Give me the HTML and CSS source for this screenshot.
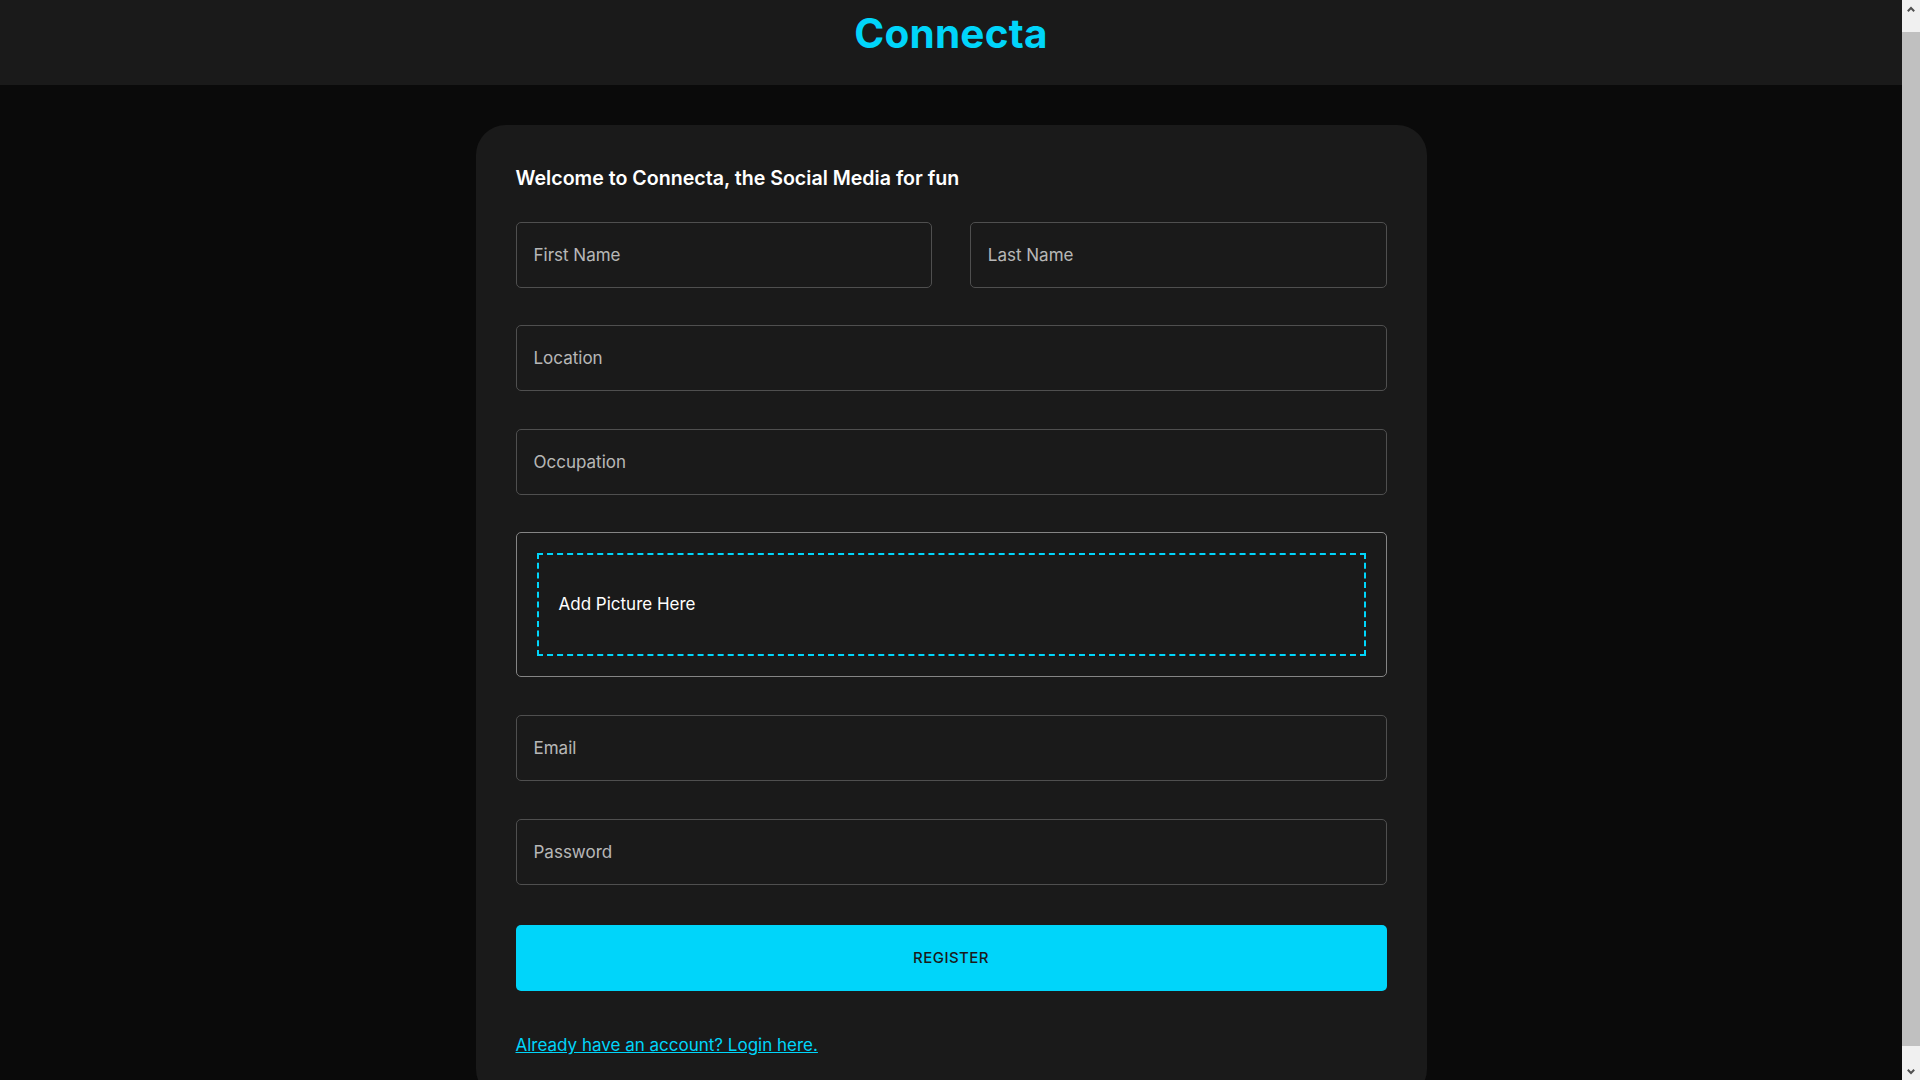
FILE: index.html
```html
<!DOCTYPE html>
<html lang="en">
<head>
<meta charset="utf-8">
<title>Connecta</title>
<link rel="stylesheet" href="styles.css">
</head>
<body>
<header class="topbar">
  <h1 class="brand">Connecta</h1>
</header>
<main class="card">
  <h2 class="welcome">Welcome to Connecta, the Social Media for fun</h2>
  <form class="form-grid">
    <div class="field"><span class="label">First Name</span></div>
    <div class="field"><span class="label">Last Name</span></div>
    <div class="field full"><span class="label">Location</span></div>
    <div class="field full"><span class="label">Occupation</span></div>
    <div class="picture-box full">
      <div class="dropzone"><p class="drop-text">Add Picture Here</p></div>
    </div>
    <div class="field full"><span class="label">Email</span></div>
    <div class="field full"><span class="label">Password</span></div>
  </form>
  <button class="register" type="button">Register</button>
  <p class="login-row"><a class="login-link" href="#">Already have an account? Login here.</a></p>
</main>
<div class="scrollbar" aria-hidden="true">
  <div class="sb-btn sb-up">
    <svg width="8" height="6" viewBox="0 0 8 6"><polyline points="0.8,5.2 4,2 7.2,5.2" fill="none" stroke="#505050" stroke-width="2"/></svg>
  </div>
  <div class="sb-thumb"></div>
  <div class="sb-btn sb-down">
    <svg width="8" height="6" viewBox="0 0 8 6"><polyline points="0.8,0.8 4,4 7.2,0.8" fill="none" stroke="#505050" stroke-width="2"/></svg>
  </div>
</div>
</body>
</html>
```
FILE: styles.css
```css
html, body {
  margin: 0;
  padding: 0;
}
body {
  background: #0a0a0a;
  font-family: "Inter", "Open Sans", "Liberation Sans", sans-serif;
  color: #ffffff;
  margin-right: 18px;
}
.topbar {
  background: #1a1a1a;
  height: 85px;
  box-sizing: border-box;
  text-align: center;
}
.brand {
  margin: 0;
  font-size: 40.5px;
  font-weight: 700;
  line-height: 67px;
  color: #00d5fa;
  letter-spacing: 0.2px;
}
.card {
  display: block;
  width: 50%;
  box-sizing: border-box;
  margin: 40px auto;
  padding: 40px;
  background: #1a1a1a;
  border-radius: 30px;
}
.welcome {
  margin: 0 0 30px;
  font-size: 19.6px;
  line-height: 26.7px;
  font-weight: 600;
  color: #ffffff;
}
.form-grid {
  display: grid;
  grid-template-columns: repeat(2, minmax(0, 1fr));
  gap: 37.6px;
}
.full {
  grid-column: span 2;
}
.field {
  height: 66px;
  box-sizing: border-box;
  border: 1px solid #4f4f4f;
  border-radius: 5px;
  padding: 0 17px;
  display: flex;
  align-items: center;
  background: #1a1a1a;
}
.label {
  font-size: 17px;
  color: rgba(255, 255, 255, 0.7);
}
.picture-box {
  border: 1px solid #858585;
  border-radius: 5px;
  padding: 20px;
}
.dropzone {
  border: 2px dashed #00d5fa;
  padding: 20px;
}
.drop-text {
  margin: 0;
  padding: 17px 0;
  font-size: 17px;
  line-height: 25px;
  color: #ffffff;
}
.register {
  display: block;
  width: 100%;
  margin: 40px 0;
  padding: 20px;
  border: 0;
  border-radius: 5px;
  background: #00d5fa;
  color: #1a1a1a;
  font-family: inherit;
  font-size: 15px;
  font-weight: 500;
  line-height: 26.5px;
  letter-spacing: 0.43px;
  text-transform: uppercase;
}
.login-row {
  margin: 0;
  padding-top: 2px;
  font-size: 17px;
  line-height: 25.7px;
}
.login-link {
  color: #00d5fa;
  text-decoration: underline;
}

/* window scrollbar overlay */
.scrollbar {
  position: fixed;
  top: 0;
  right: 0;
  width: 18px;
  height: 100vh;
  background: #f0f0f0;
  display: flex;
  flex-direction: column;
}
.sb-btn {
  display: flex;
  justify-content: center;
  background: #f0f0f0;
}
.sb-up {
  height: 32px;
  align-items: flex-start;
}
.sb-up svg {
  margin-top: 6px;
}
.sb-down {
  height: 34px;
  align-items: flex-end;
}
.sb-down svg {
  margin-bottom: 5px;
}
.sb-thumb {
  flex: 1;
  background: #c0c0c0;
}
```
